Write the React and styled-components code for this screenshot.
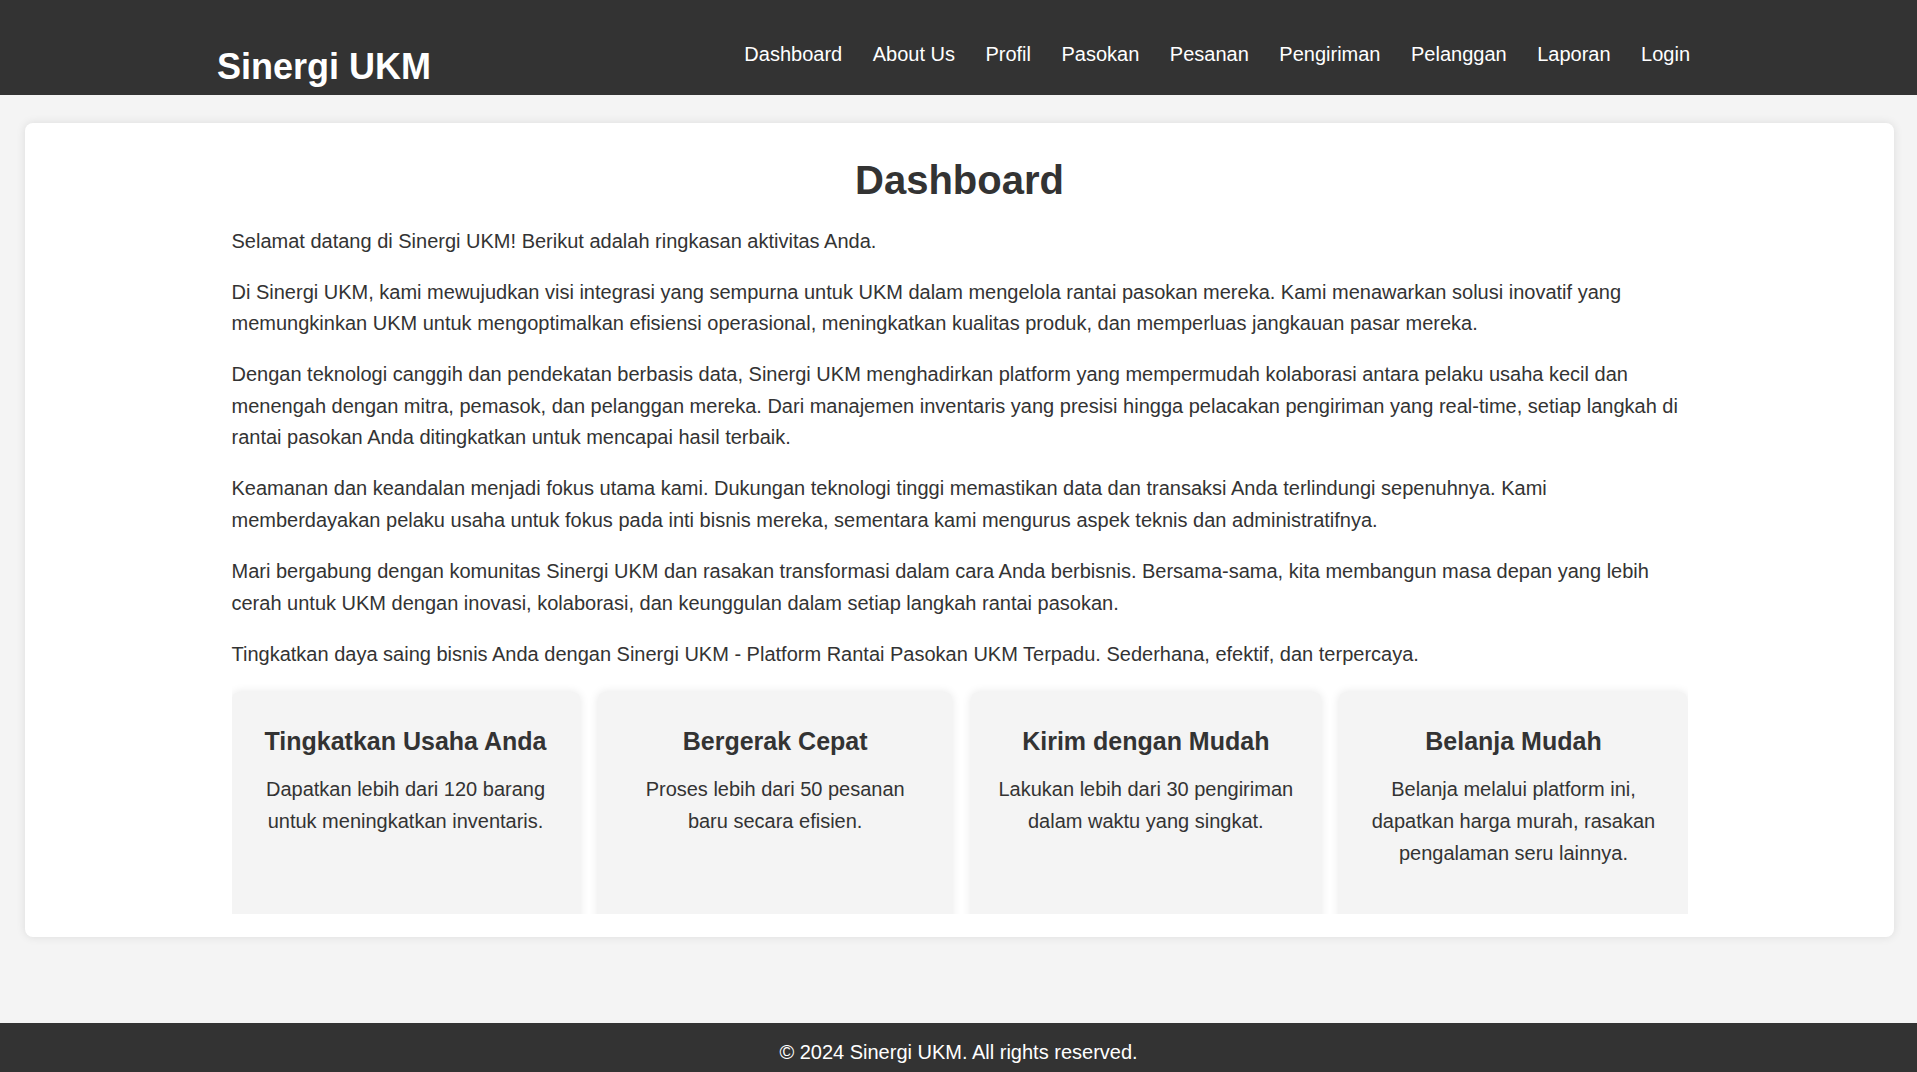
import React from "react"
import styled, { createGlobalStyle } from "styled-components"

const GlobalStyle = createGlobalStyle`
  * {
    box-sizing: border-box;
  }
  body {
    margin: 0;
    background: #f4f4f4;
    color: #333;
    font-family: "Liberation Sans", Arial, sans-serif;
  }
`

const Header = styled.header`
  background: #333;
  height: 95px;
`

const HeaderInner = styled.div`
  max-width: 1483px;
  margin: 0 auto;
  display: flex;
  justify-content: space-between;
  align-items: flex-start;
`

const Logo = styled.h1`
  margin: 45.8px 0 0 0;
  font-size: 36px;
  font-weight: bold;
  color: #fff;
  line-height: normal;
`

const Nav = styled.ul`
  list-style: none;
  margin: 42.7px 0 0 0;
  padding: 0;
  display: flex;
  gap: 10.5px;
`

const NavLink = styled.a`
  display: block;
  padding: 0 10px;
  font-size: 20px;
  line-height: normal;
  color: #fff;
  text-decoration: none;
`

const Main = styled.main`
  padding: 27.7px 23px 86px 25px;
`

const Card = styled.section`
  background: #fff;
  border-radius: 8px;
  box-shadow: 0 0 10px rgba(0, 0, 0, 0.1);
  padding: 35px 20px 23px;
`

const Content = styled.div`
  max-width: 1456px;
  margin: 0 auto;
`

const Title = styled.h2`
  margin: 0 0 23px 0;
  font-size: 40px;
  font-weight: bold;
  line-height: normal;
  text-align: center;
  color: #333;
`

const Paragraph = styled.p`
  margin: 0 0 19.4px 0;
  font-size: 20px;
  line-height: 31.6px;
`

const FeatureRow = styled.div`
  display: grid;
  grid-template-columns: 348px 354px 350px 348px;
  justify-content: space-between;
  height: 232px;
  margin-top: -8px;
  padding-top: 10px;
  overflow: hidden;
`

const Feature = styled.div`
  height: 240px;
  background: #f4f4f4;
  border-radius: 8px;
  box-shadow: 0 0 10px rgba(0, 0, 0, 0.1);
  padding: 29.7px 26px 0;
  text-align: center;
`

const FeatureTitle = styled.h3`
  margin: 0 0 11.8px 0;
  font-size: 25px;
  font-weight: bold;
  line-height: 40px;
  color: #333;
`

const FeatureText = styled.p`
  margin: 0;
  font-size: 20px;
  line-height: 32px;
`

const Footer = styled.footer`
  background: #333;
  color: #fff;
  text-align: center;
  padding: 18px 0;
  font-size: 20px;
  line-height: normal;
`

const links = [
  "Dashboard",
  "About Us",
  "Profil",
  "Pasokan",
  "Pesanan",
  "Pengiriman",
  "Pelanggan",
  "Laporan",
  "Login",
]

const paragraphs = [
  "Selamat datang di Sinergi UKM! Berikut adalah ringkasan aktivitas Anda.",
  "Di Sinergi UKM, kami mewujudkan visi integrasi yang sempurna untuk UKM dalam mengelola rantai pasokan mereka. Kami menawarkan solusi inovatif yang memungkinkan UKM untuk mengoptimalkan efisiensi operasional, meningkatkan kualitas produk, dan memperluas jangkauan pasar mereka.",
  "Dengan teknologi canggih dan pendekatan berbasis data, Sinergi UKM menghadirkan platform yang mempermudah kolaborasi antara pelaku usaha kecil dan menengah dengan mitra, pemasok, dan pelanggan mereka. Dari manajemen inventaris yang presisi hingga pelacakan pengiriman yang real-time, setiap langkah di rantai pasokan Anda ditingkatkan untuk mencapai hasil terbaik.",
  "Keamanan dan keandalan menjadi fokus utama kami. Dukungan teknologi tinggi memastikan data dan transaksi Anda terlindungi sepenuhnya. Kami memberdayakan pelaku usaha untuk fokus pada inti bisnis mereka, sementara kami mengurus aspek teknis dan administratifnya.",
  "Mari bergabung dengan komunitas Sinergi UKM dan rasakan transformasi dalam cara Anda berbisnis. Bersama-sama, kita membangun masa depan yang lebih cerah untuk UKM dengan inovasi, kolaborasi, dan keunggulan dalam setiap langkah rantai pasokan.",
  "Tingkatkan daya saing bisnis Anda dengan Sinergi UKM - Platform Rantai Pasokan UKM Terpadu. Sederhana, efektif, dan terpercaya.",
]

const features = [
  {
    title: "Tingkatkan Usaha Anda",
    text: "Dapatkan lebih dari 120 barang untuk meningkatkan inventaris.",
  },
  {
    title: "Bergerak Cepat",
    text: "Proses lebih dari 50 pesanan baru secara efisien.",
  },
  {
    title: "Kirim dengan Mudah",
    text: "Lakukan lebih dari 30 pengiriman dalam waktu yang singkat.",
  },
  {
    title: "Belanja Mudah",
    text: "Belanja melalui platform ini, dapatkan harga murah, rasakan pengalaman seru lainnya.",
  },
]

const App = () => {
  return (
    <>
      <GlobalStyle />
      <Header>
        <HeaderInner>
          <Logo>Sinergi UKM</Logo>
          <nav>
            <Nav>
              {links.map(link => (
                <li key={link}>
                  <NavLink href="#">{link}</NavLink>
                </li>
              ))}
            </Nav>
          </nav>
        </HeaderInner>
      </Header>
      <Main>
        <Card>
          <Content>
            <Title>Dashboard</Title>
            {paragraphs.map((text, i) => (
              <Paragraph key={i}>{text}</Paragraph>
            ))}
            <FeatureRow>
              {features.map(f => (
                <Feature key={f.title}>
                  <FeatureTitle>{f.title}</FeatureTitle>
                  <FeatureText>{f.text}</FeatureText>
                </Feature>
              ))}
            </FeatureRow>
          </Content>
        </Card>
      </Main>
      <Footer>© 2024 Sinergi UKM. All rights reserved.</Footer>
    </>
  )
}

export default App
